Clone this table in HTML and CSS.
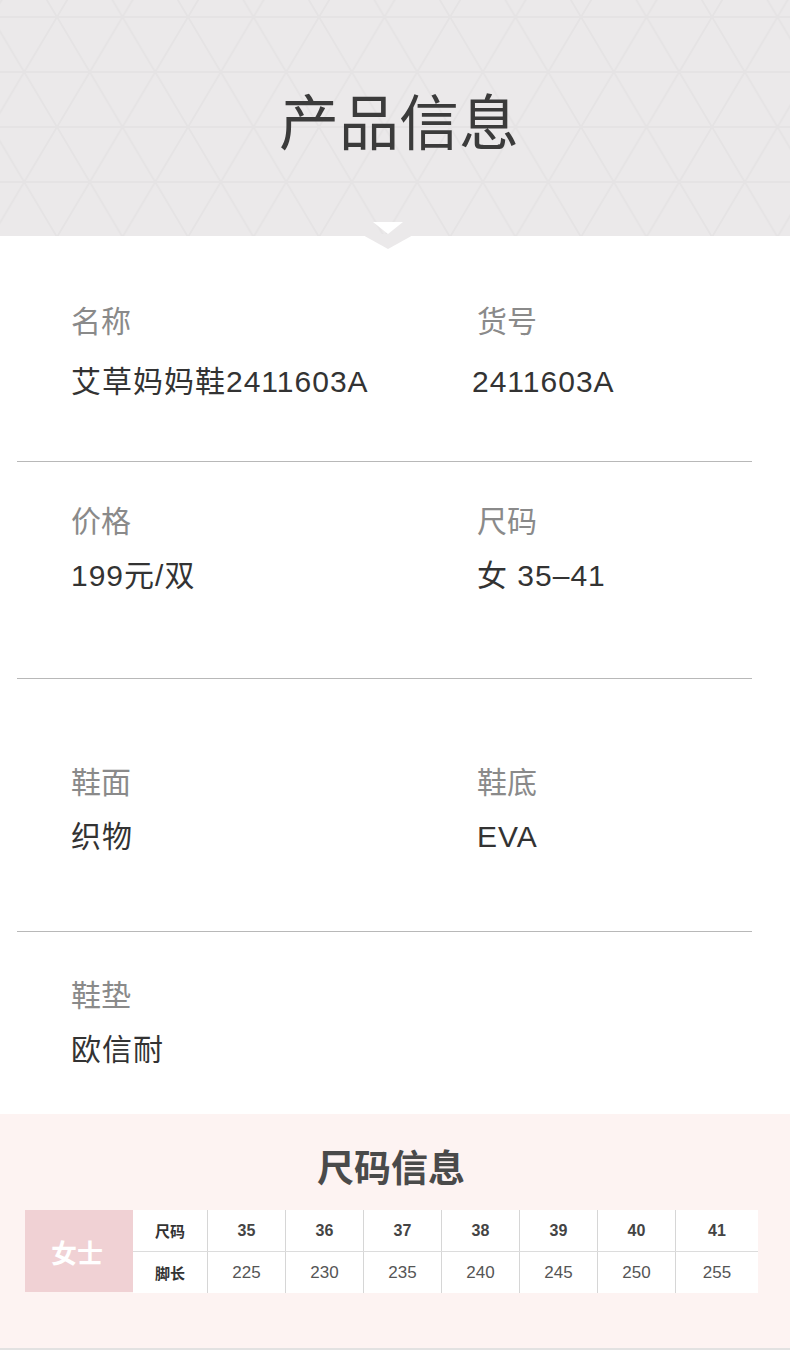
FILE: index.html
```html
<!DOCTYPE html>
<html lang="zh-CN">

<head>
    <meta charset="UTF-8">
    <meta name="viewport" content="width=device-width, initial-scale=1.0">
    <title>产品信息</title>
    <link rel="stylesheet" href="styles.css">
</head>

<body>
    <div class="head">
        <svg class="grid" width="790" height="236">
            <defs>
                <pattern id="tri" patternUnits="userSpaceOnUse" x="24.25" y="17" width="65.5" height="110">
                    <path d="M0 0H65.5M0 55H65.5M0 110H65.5M32.75 0L0 55M32.75 0L65.5 55M0 55L32.75 110M65.5 55L32.75 110"
                        stroke="#e5e3e4" stroke-width="1.8" fill="none" />
                </pattern>
            </defs>
            <rect width="790" height="236" fill="url(#tri)" />
        </svg>
        <h1>产品信息</h1>
        <svg class="arrow" width="54" height="30" viewBox="0 0 54 30">
            <polygon points="0,13 54,13 27,28" fill="#ebe9ea" />
            <polygon points="12,1 42,1 27,13" fill="#fff" />
        </svg>
    </div>

    <div class="info">
        <div class="row r1">
            <div class="cell">
                <p class="label">名称</p>
                <p class="value">艾草妈妈鞋2411603A</p>
            </div>
            <div class="cell right">
                <p class="label">货号</p>
                <p class="value">2411603A</p>
            </div>
        </div>
        <div class="line"></div>
        <div class="row r2">
            <div class="cell">
                <p class="label">价格</p>
                <p class="value">199元/双</p>
            </div>
            <div class="cell">
                <p class="label">尺码</p>
                <p class="value">女 35‒41</p>
            </div>
        </div>
        <div class="line"></div>
        <div class="row r3">
            <div class="cell">
                <p class="label">鞋面</p>
                <p class="value">织物</p>
            </div>
            <div class="cell">
                <p class="label">鞋底</p>
                <p class="value">EVA</p>
            </div>
        </div>
        <div class="line"></div>
        <div class="row r4">
            <div class="cell">
                <p class="label">鞋垫</p>
                <p class="value">欧信耐</p>
            </div>
        </div>
    </div>

    <div class="size">
        <h2>尺码信息</h2>
        <div class="chart">
            <div class="sex">女士</div>
            <table>
                <tr class="top">
                    <th>尺码</th>
                    <td>35</td>
                    <td>36</td>
                    <td>37</td>
                    <td>38</td>
                    <td>39</td>
                    <td>40</td>
                    <td>41</td>
                </tr>
                <tr>
                    <th>脚长</th>
                    <td>225</td>
                    <td>230</td>
                    <td>235</td>
                    <td>240</td>
                    <td>245</td>
                    <td>250</td>
                    <td>255</td>
                </tr>
            </table>
        </div>
    </div>
</body>

</html>
```

FILE: styles.css
```css
* {
    margin: 0;
    padding: 0;
}

body {
    width: 790px;
    font-family: "Liberation Sans", "Noto Sans CJK SC", sans-serif;
    background-color: #fff;
}

/* 顶部标题 */
.head {
    height: 236px;
    position: relative;
    display: flex;
    justify-content: center;
    align-items: center;
    background-color: #ebe9ea;
}

.grid {
    position: absolute;
    left: 0;
    top: 0;
}

.head h1 {
    position: relative;
    font-family: "Noto Sans CJK SC", sans-serif;
    font-size: 60px;
    font-weight: 400;
    line-height: 60px;
    color: #3b3b3b;
    margin-left: 8px;
    margin-top: 2px;
}

.arrow {
    position: absolute;
    left: 361px;
    bottom: -15px;
}

/* 产品信息 */
.info {
    height: 878px;
}

.row {
    display: grid;
    grid-template-columns: 406px 1fr;
    padding-left: 71px;
    box-sizing: border-box;
}

.r1 {
    padding-top: 71px;
    height: 225px;
}

.r2 {
    padding-top: 45px;
    height: 216px;
}

.r3 {
    padding-top: 89px;
    height: 252px;
}

.r4 {
    padding-top: 49px;
}

.label {
    font-size: 30px;
    line-height: 30px;
    color: #8a8a8a;
    margin-bottom: 24px;
}

.r1 .label {
    margin-bottom: 30px;
}

.right .value {
    margin-left: -5px;
}

.value {
    font-size: 30px;
    line-height: 30px;
    color: #333;
    letter-spacing: 1px;
}

.line {
    height: 1px;
    width: 735px;
    margin-left: 17px;
    background-color: #b8b8b8;
}

/* 尺码信息 */
.size {
    height: 236px;
    box-sizing: border-box;
    padding-top: 34px;
    background-color: #fdf3f2;
    border-bottom: 2px solid #e2e2e2;
}

.size h2 {
    text-align: center;
    font-family: "Noto Sans CJK SC", sans-serif;
    font-size: 37px;
    line-height: 36px;
    font-weight: 700;
    color: #4a4a4a;
    margin-right: 8px;
}

.chart {
    display: flex;
    width: 733px;
    height: 82px;
    margin: 26px 0 0 25px;
}

.sex {
    width: 108px;
    flex-shrink: 0;
    display: flex;
    justify-content: center;
    align-items: center;
    background-color: #f0d1d4;
    color: #fff;
    font-family: "Noto Sans CJK SC", sans-serif;
    font-size: 26px;
    font-weight: 700;
    padding-right: 4px;
    box-sizing: border-box;
}

table {
    width: 625px;
    flex-shrink: 0;
    border-collapse: collapse;
    background-color: #fff;
    table-layout: fixed;
}

table th,
table td {
    height: 41px;
    text-align: center;
    color: #555;
    font-size: 17px;
}

table th {
    width: 74px;
    font-size: 15px;
    font-weight: 700;
    color: #333;
    font-family: "Noto Sans CJK SC", sans-serif;
}

table td {
    width: 77px;
    border-left: 1px solid #d6d6d6;
}

table td:last-child {
    width: 82px;
}

.top th,
.top td {
    border-bottom: 1px solid #dcdcdc;
}

.top td {
    font-weight: 700;
    color: #444;
    font-size: 16px;
}
```
